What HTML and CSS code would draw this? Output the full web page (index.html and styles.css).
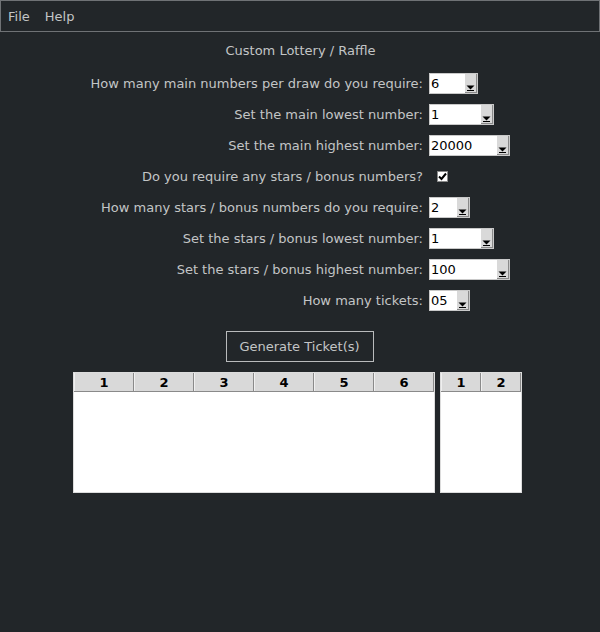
FILE: index.html
```html
<!DOCTYPE html>
<html>
<head>
<meta charset="utf-8">
<link rel="stylesheet" href="styles.css">
</head>
<body>
<div class="menubar">
  <span class="menu-item">File</span>
  <span class="menu-item">Help</span>
</div>
<div class="title">Custom Lottery / Raffle</div>
<div class="form">
  <div class="lbl">How many main numbers per draw do you require:</div>
  <div class="ctl"><div class="combo w49"><span class="val">6</span><span class="arrow"><svg width="11" height="19" viewBox="0 0 11 19"><polygon points="1.5,11.5 9.5,11.5 5.5,15.5" fill="#000"/><rect x="2" y="16" width="7" height="1" fill="#000"/></svg></span></div></div>

  <div class="lbl">Set the main lowest number:</div>
  <div class="ctl"><div class="combo w65"><span class="val">1</span><span class="arrow"><svg width="11" height="19" viewBox="0 0 11 19"><polygon points="1.5,11.5 9.5,11.5 5.5,15.5" fill="#000"/><rect x="2" y="16" width="7" height="1" fill="#000"/></svg></span></div></div>

  <div class="lbl">Set the main highest number:</div>
  <div class="ctl"><div class="combo w81"><span class="val">20000</span><span class="arrow"><svg width="11" height="19" viewBox="0 0 11 19"><polygon points="1.5,11.5 9.5,11.5 5.5,15.5" fill="#000"/><rect x="2" y="16" width="7" height="1" fill="#000"/></svg></span></div></div>

  <div class="lbl">Do you require any stars / bonus numbers?</div>
  <div class="ctl"><div class="check"><svg width="9" height="9" viewBox="0 0 9 9"><path d="M1 4.5 L3.5 7 L8 1.5" stroke="#000" stroke-width="2" fill="none"/></svg></div></div>

  <div class="lbl">How many stars / bonus numbers do you require:</div>
  <div class="ctl"><div class="combo w41"><span class="val">2</span><span class="arrow"><svg width="11" height="19" viewBox="0 0 11 19"><polygon points="1.5,11.5 9.5,11.5 5.5,15.5" fill="#000"/><rect x="2" y="16" width="7" height="1" fill="#000"/></svg></span></div></div>

  <div class="lbl">Set the stars / bonus lowest number:</div>
  <div class="ctl"><div class="combo w65"><span class="val">1</span><span class="arrow"><svg width="11" height="19" viewBox="0 0 11 19"><polygon points="1.5,11.5 9.5,11.5 5.5,15.5" fill="#000"/><rect x="2" y="16" width="7" height="1" fill="#000"/></svg></span></div></div>

  <div class="lbl">Set the stars / bonus highest number:</div>
  <div class="ctl"><div class="combo w81"><span class="val">100</span><span class="arrow"><svg width="11" height="19" viewBox="0 0 11 19"><polygon points="1.5,11.5 9.5,11.5 5.5,15.5" fill="#000"/><rect x="2" y="16" width="7" height="1" fill="#000"/></svg></span></div></div>

  <div class="lbl">How many tickets:</div>
  <div class="ctl"><div class="combo w41"><span class="val">05</span><span class="arrow"><svg width="11" height="19" viewBox="0 0 11 19"><polygon points="1.5,11.5 9.5,11.5 5.5,15.5" fill="#000"/><rect x="2" y="16" width="7" height="1" fill="#000"/></svg></span></div></div>
</div>
<div class="btn-row"><div class="btn">Generate Ticket(s)</div></div>
<div class="tables">
  <div class="table main">
    <div class="thead">
      <div class="th">1</div><div class="th">2</div><div class="th">3</div><div class="th">4</div><div class="th">5</div><div class="th">6</div>
    </div>
    <div class="tbody"></div>
  </div>
  <div class="table stars">
    <div class="thead">
      <div class="th">1</div><div class="th">2</div>
    </div>
    <div class="tbody"></div>
  </div>
</div>
</body>
</html>
```
FILE: styles.css
```css
html, body {
  margin: 0;
  padding: 0;
  background: #222629;
  width: 600px;
  height: 632px;
  overflow: hidden;
  font-family: "DejaVu Sans", sans-serif;
  font-size: 13px;
  color: #c3c5c6;
}
.menubar {
  height: 30px;
  border: 1px solid #6f7275;
  display: flex;
  align-items: center;
  padding-left: 7px;
  gap: 15px;
}
.title {
  height: 36px;
  display: flex;
  align-items: center;
  justify-content: center;
  padding-left: 1px;
}
.form {
  display: grid;
  grid-template-columns: 1fr 171px;
  column-gap: 6px;
  grid-auto-rows: 31px;
}
.lbl {
  display: flex;
  align-items: center;
  justify-content: flex-end;
  white-space: nowrap;
}
.ctl {
  display: flex;
  align-items: center;
}
.combo {
  box-sizing: border-box;
  height: 21px;
  background: #fff;
  border: 1px solid #c9c9c9;
  display: flex;
  align-items: stretch;
  justify-content: space-between;
}
.w41 { width: 41px; }
.w49 { width: 49px; }
.w65 { width: 65px; }
.w81 { width: 81px; }
.val {
  color: #000;
  font-size: 13px;
  line-height: 19px;
  padding-left: 1px;
}
.arrow {
  width: 12px;
  background: #d9d9d9;
  border-right: 1px solid #8a8a8a;
  border-bottom: 1px solid #8a8a8a;
  box-sizing: border-box;
  display: flex;
}
.arrow svg { display: block; }
.check {
  margin-left: 8px;
  width: 11px;
  height: 11px;
  box-sizing: border-box;
  background: #fff;
  border: 1px solid #8a8a8a;
  display: flex;
  align-items: center;
  justify-content: center;
}
.btn-row {
  display: flex;
  justify-content: center;
  margin-top: 15px;
  padding-right: 1px;
}
.btn {
  box-sizing: border-box;
  width: 148px;
  height: 31px;
  border: 1px solid #b9bbbc;
  display: flex;
  align-items: center;
  justify-content: center;
}
.tables {
  display: flex;
  gap: 5px;
  margin-top: 10px;
  padding-left: 73px;
}
.table {
  box-sizing: border-box;
  height: 121px;
  background: #fff;
  border: 1px solid #dcdcdc;
  display: flex;
  flex-direction: column;
}
.main { width: 362px; }
.stars { width: 82px; }
.thead {
  display: flex;
  height: 18px;
  border-bottom: 1px solid #8a8a8a;
}
.th {
  flex: 1;
  background: #d9d9d9;
  border-left: 1px solid #efefef;
  border-right: 1px solid #8a8a8a;
  color: #000;
  font-weight: bold;
  font-size: 13px;
  display: flex;
  align-items: center;
  justify-content: center;
}
.tbody {
  flex: 1;
  background: #fff;
}
```
